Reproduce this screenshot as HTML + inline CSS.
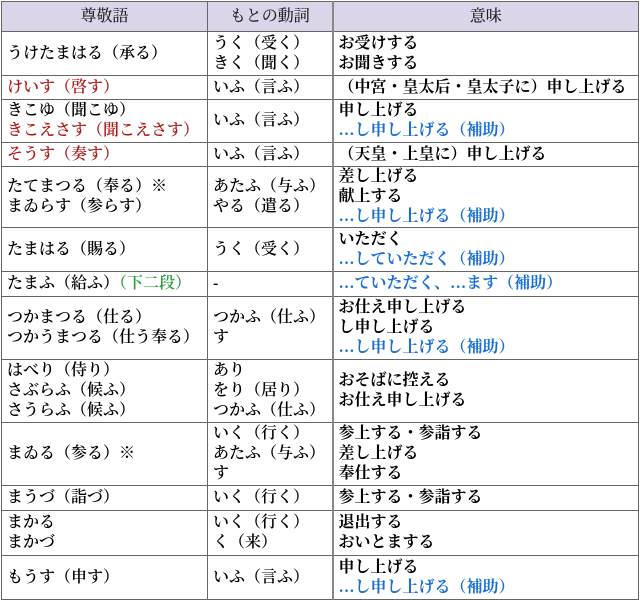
<!DOCTYPE html>
<html><head><meta charset="utf-8"><style>
body{margin:0;background:#fff;width:640px;height:601px;overflow:hidden}
table{position:absolute;left:1px;top:1px;border-collapse:collapse;table-layout:fixed;font-family:"Liberation Serif","Noto Serif CJK JP",serif;font-size:16px;line-height:20px;color:#000}
td,th{border:1px solid #666;padding:0 0 0 5px;vertical-align:middle;white-space:nowrap;overflow:hidden;font-weight:600}
th{background:#dcd4e8;font-weight:500;text-align:center;padding:0;color:#222}
td.c3{font-weight:bold;border-left:2px solid #888}
th.c3{border-left:2px solid #888}
.r{color:#b01818}.b{color:#1a6fd8}.g{color:#2a9a3a}
</style></head><body>
<table>
<colgroup><col style="width:206px"><col style="width:125px"><col style="width:306px"></colgroup>
<tr style="height:30px"><th>尊敬語</th><th>もとの動詞</th><th class="c3">意味</th></tr>
<tr style="height:44px"><td>うけたまはる（承る）</td><td>うく（受く）<br>きく（聞く）</td><td class="c3">お受けする<br>お聞きする</td></tr>
<tr style="height:24px"><td class="r">けいす（啓す）</td><td>いふ（言ふ）</td><td class="c3">（中宮・皇太后・皇太子に）申し上げる</td></tr>
<tr style="height:43px"><td>きこゆ（聞こゆ）<br><span class="r">きこえさす（聞こえさす）</span></td><td>いふ（言ふ）</td><td class="c3">申し上げる<br><span class="b">…し申し上げる（補助）</span></td></tr>
<tr style="height:24px"><td class="r">そうす（奏す）</td><td>いふ（言ふ）</td><td class="c3">（天皇・上皇に）申し上げる</td></tr>
<tr style="height:61px"><td>たてまつる（奉る）※<br>まゐらす（参らす）</td><td>あたふ（与ふ）<br>やる（遣る）</td><td class="c3">差し上げる<br>献上する<br><span class="b">…し申し上げる（補助）</span></td></tr>
<tr style="height:44px"><td>たまはる（賜る）</td><td>うく（受く）</td><td class="c3">いただく<br><span class="b">…していただく（補助）</span></td></tr>
<tr style="height:25px"><td>たまふ（給ふ）<span class="g">（下二段）</span></td><td>-</td><td class="c3 b">…ていただく、…ます（補助）</td></tr>
<tr style="height:63px"><td>つかまつる（仕る）<br>つかうまつる（仕う奉る）</td><td>つかふ（仕ふ）<br>す</td><td class="c3">お仕え申し上げる<br>し申し上げる<br><span class="b">…し申し上げる（補助）</span></td></tr>
<tr style="height:63px"><td>はべり（侍り）<br>さぶらふ（候ふ）<br>さうらふ（候ふ）</td><td>あり<br>をり（居り）<br>つかふ（仕ふ）</td><td class="c3">おそばに控える<br>お仕え申し上げる</td></tr>
<tr style="height:63px"><td>まゐる（参る）※</td><td>いく（行く）<br>あたふ（与ふ）<br>す</td><td class="c3">参上する・参詣する<br>差し上げる<br>奉仕する</td></tr>
<tr style="height:25px"><td>まうづ（詣づ）</td><td>いく（行く）</td><td class="c3">参上する・参詣する</td></tr>
<tr style="height:45px"><td>まかる<br>まかづ</td><td>いく（行く）<br>く（来）</td><td class="c3">退出する<br>おいとまする</td></tr>
<tr style="height:44px"><td>もうす（申す）</td><td>いふ（言ふ）</td><td class="c3">申し上げる<br><span class="b">…し申し上げる（補助）</span></td></tr>
</table>
</body></html>
